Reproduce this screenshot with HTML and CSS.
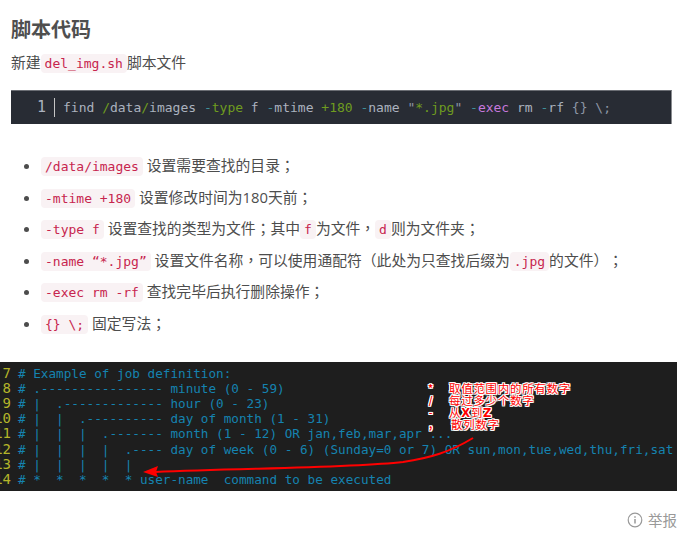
FILE: index.html
```html
<!DOCTYPE html>
<html lang="zh-CN">
<head>
<meta charset="utf-8">
<title>脚本代码</title>
<link rel="stylesheet" href="styles.css">
</head>
<body>
<article class="article">
  <h2 class="title">脚本代码</h2>
  <p class="para">新建<code class="ic">del_img.sh</code>脚本文件</p>
  <pre class="block"><span class="ln">1</span><code class="bc">find <i class="g">/</i>data<i class="g">/</i>images <i class="t">-</i><i class="g">type</i> f <i class="t">-</i>mtime <i class="g">+180</i> <i class="t">-</i>name <i class="q">"</i><i class="g">*.jpg</i><i class="q">"</i> <i class="t">-</i><i class="p">exec</i> rm <i class="t">-</i>rf <i class="q">{} \;</i></code></pre>
  <ul class="list">
    <li><code class="ic">/data/images</code> 设置需要查找的目录<span class="pn" lang="zh-TW">；</span></li>
    <li><code class="ic">-mtime +180</code> 设置修改时间为180天前<span class="pn" lang="zh-TW">；</span></li>
    <li><code class="ic">-type f</code> 设置查找的类型为文件<span class="pn" lang="zh-TW">；</span>其中<code class="ic">f</code>为文件<span class="pn" lang="zh-TW">，</span><code class="ic">d</code>则为文件夹<span class="pn" lang="zh-TW">；</span></li>
    <li><code class="ic">-name “*.jpg”</code> 设置文件名称<span class="pn" lang="zh-TW">，</span>可以使用通配符<span class="pn" lang="zh-TW">（</span>此处为只查找后缀为<code class="ic">.jpg</code>的文件<span class="pn" lang="zh-TW">）；</span></li>
    <li><code class="ic">-exec rm -rf</code> 查找完毕后执行删除操作<span class="pn" lang="zh-TW">；</span></li>
    <li><code class="ic">{} \;</code> 固定写法<span class="pn" lang="zh-TW">；</span></li>
  </ul>
  <figure class="term">
    <div class="row"><span class="n">7</span><span class="c"># Example of job definition:</span></div>
    <div class="row"><span class="n">8</span><span class="c"># .---------------- minute (0 - 59)</span></div>
    <div class="row"><span class="n">9</span><span class="c"># |  .------------- hour (0 - 23)</span></div>
    <div class="row"><span class="n">10</span><span class="c"># |  |  .---------- day of month (1 - 31)</span></div>
    <div class="row"><span class="n">11</span><span class="c"># |  |  |  .------- month (1 - 12) OR jan,feb,mar,apr ...</span></div>
    <div class="row"><span class="n">12</span><span class="c"># |  |  |  |  .---- day of week (0 - 6) (Sunday=0 or 7) OR sun,mon,tue,wed,thu,fri,sat</span></div>
    <div class="row"><span class="n">13</span><span class="c"># |  |  |  |  |</span></div>
    <div class="row"><span class="n">14</span><span class="c"># *  *  *  *  * user-name  command to be executed</span></div>
    <svg class="arrow" width="677" height="129" viewBox="0 0 677 129" aria-hidden="true">
      <path d="M473 76C450 90 430 96 403 100C350 106 250 106 155 110" fill="none" stroke="#f00" stroke-width="2"/>
      <path d="M143 110L158 104L156 110L158 115Z" fill="#f00"/>
    </svg>
    <div class="note">
      <span class="mk">*</span><span>取值范围内的所有数字</span>
      <span class="mk">/</span><span>每过多少个数字</span>
      <span class="mk">-</span><span>从<b class="big">X</b>到<b class="big">Z</b></span>
      <span class="mk">,</span><span class="in">散列数字</span>
    </div>
  </figure>
  <div class="report">
    <svg width="16" height="16" viewBox="0 0 16 16" aria-hidden="true">
      <circle cx="8" cy="8" r="6.8" fill="none" stroke="#999" stroke-width="1.2"/>
      <path d="M8 7v4.6M8 4.2v1.5" fill="none" stroke="#999" stroke-width="1.5"/>
    </svg>
    <span>举报</span>
  </div>
</article>
</body>
</html>
```
FILE: styles.css
```css
* { box-sizing: border-box; }
html, body { margin: 0; padding: 0; background: #fff; }
body {
  width: 686px;
  height: 535px;
  overflow: hidden;
  font-family: "Open Sans", "Noto Sans CJK SC", sans-serif;
  font-size: 14.8px;
  color: #4d4d4d;
  text-spacing-trim: space-all;
}
.article { padding-top: 16px; }
.title {
  margin: 0 0 0 11px;
  font-size: 20px;
  line-height: 28px;
  font-weight: 700;
  color: #4f4f4f;
}
.para {
  margin: 6px 0 0 11px;
  line-height: 24px;
  height: 24px;
}
.pn { font-family: "Noto Sans CJK TC", sans-serif; }
code, pre, .term {
  font-family: "DejaVu Sans Mono", "Liberation Mono", monospace;
}
code { font-size: 13px; }
.ic {
  background: #f9f2f4;
  color: #c7254e;
  padding: 2px 4px;
  border-radius: 4px;
}
.block {
  margin: 16px 14px 0 11px;
  height: 34px;
  display: flex;
  align-items: center;
  background: #282c34;
  border-top: 1px solid #6b6e74;
  border-right: 1px solid #8a8c90;
  color: #abb2bf;
  font-size: 13px;
  overflow: hidden;
}
.ln {
  width: 44px;
  height: 19px;
  line-height: 19px;
  padding-right: 8px;
  text-align: right;
  font-size: 15px;
  border-right: 1px solid #c5c5c5;
  color: #abb2bf;
}
.bc { margin-left: 8px; color: #abb2bf; }
.bc i { font-style: normal; }
.g { color: #6f9c1f; }
.t { color: #3f8f9a; }
.q { color: #8d96a5; }
.p { color: #c678dd; }
.list {
  margin: 25px 0 0 11px;
  padding: 0 0 0 30px;
  list-style: disc;
}
.list li {
  height: 31.6px;
  line-height: 31.6px;
  white-space: nowrap;
}
.term {
  position: relative;
  margin: 23px 0 0;
  width: 677px;
  height: 129px;
  padding-top: 4px;
  background: #1e1e1e;
  font-size: 12.67px;
  overflow: hidden;
}
.row {
  display: flex;
  height: 15.2px;
  line-height: 15.2px;
  white-space: pre;
}
.n {
  flex: none;
  width: 11px;
  margin-right: 7px;
  display: flex;
  justify-content: flex-end;
  overflow: hidden;
  color: #b5b52a;
  font-size: 14px;
}
.c { color: #1583b0; }
.arrow { position: absolute; left: 0; top: 0; }
.note {
  position: absolute;
  left: 426px;
  top: 20px;
  display: grid;
  grid-template-columns: 23px auto;
  grid-auto-rows: 12.3px;
  font-family: "Noto Sans CJK SC", sans-serif;
  font-size: 11.4px;
  letter-spacing: 0.8px;
  line-height: 12.3px;
  color: #f00;
  text-shadow: 1px 0 0 #fff, -1px 0 0 #fff, 0 1px 0 #fff, 0 -1px 0 #fff, 1px 1px 0 #fff, -1px -1px 0 #fff, 1px -1px 0 #fff, -1px 1px 0 #fff;
}
.mk { font-weight: 700; font-size: 10px; text-align: center; width: 10px; }
.big { font-family: "DejaVu Sans", sans-serif; font-size: 11.5px; }
.in { padding-left: 2px; }
.report {
  display: flex;
  align-items: center;
  justify-content: flex-end;
  gap: 5px;
  width: 677px;
  margin-top: 18px;
  height: 22px;
  font-size: 14.5px;
  color: #999;
}
```
